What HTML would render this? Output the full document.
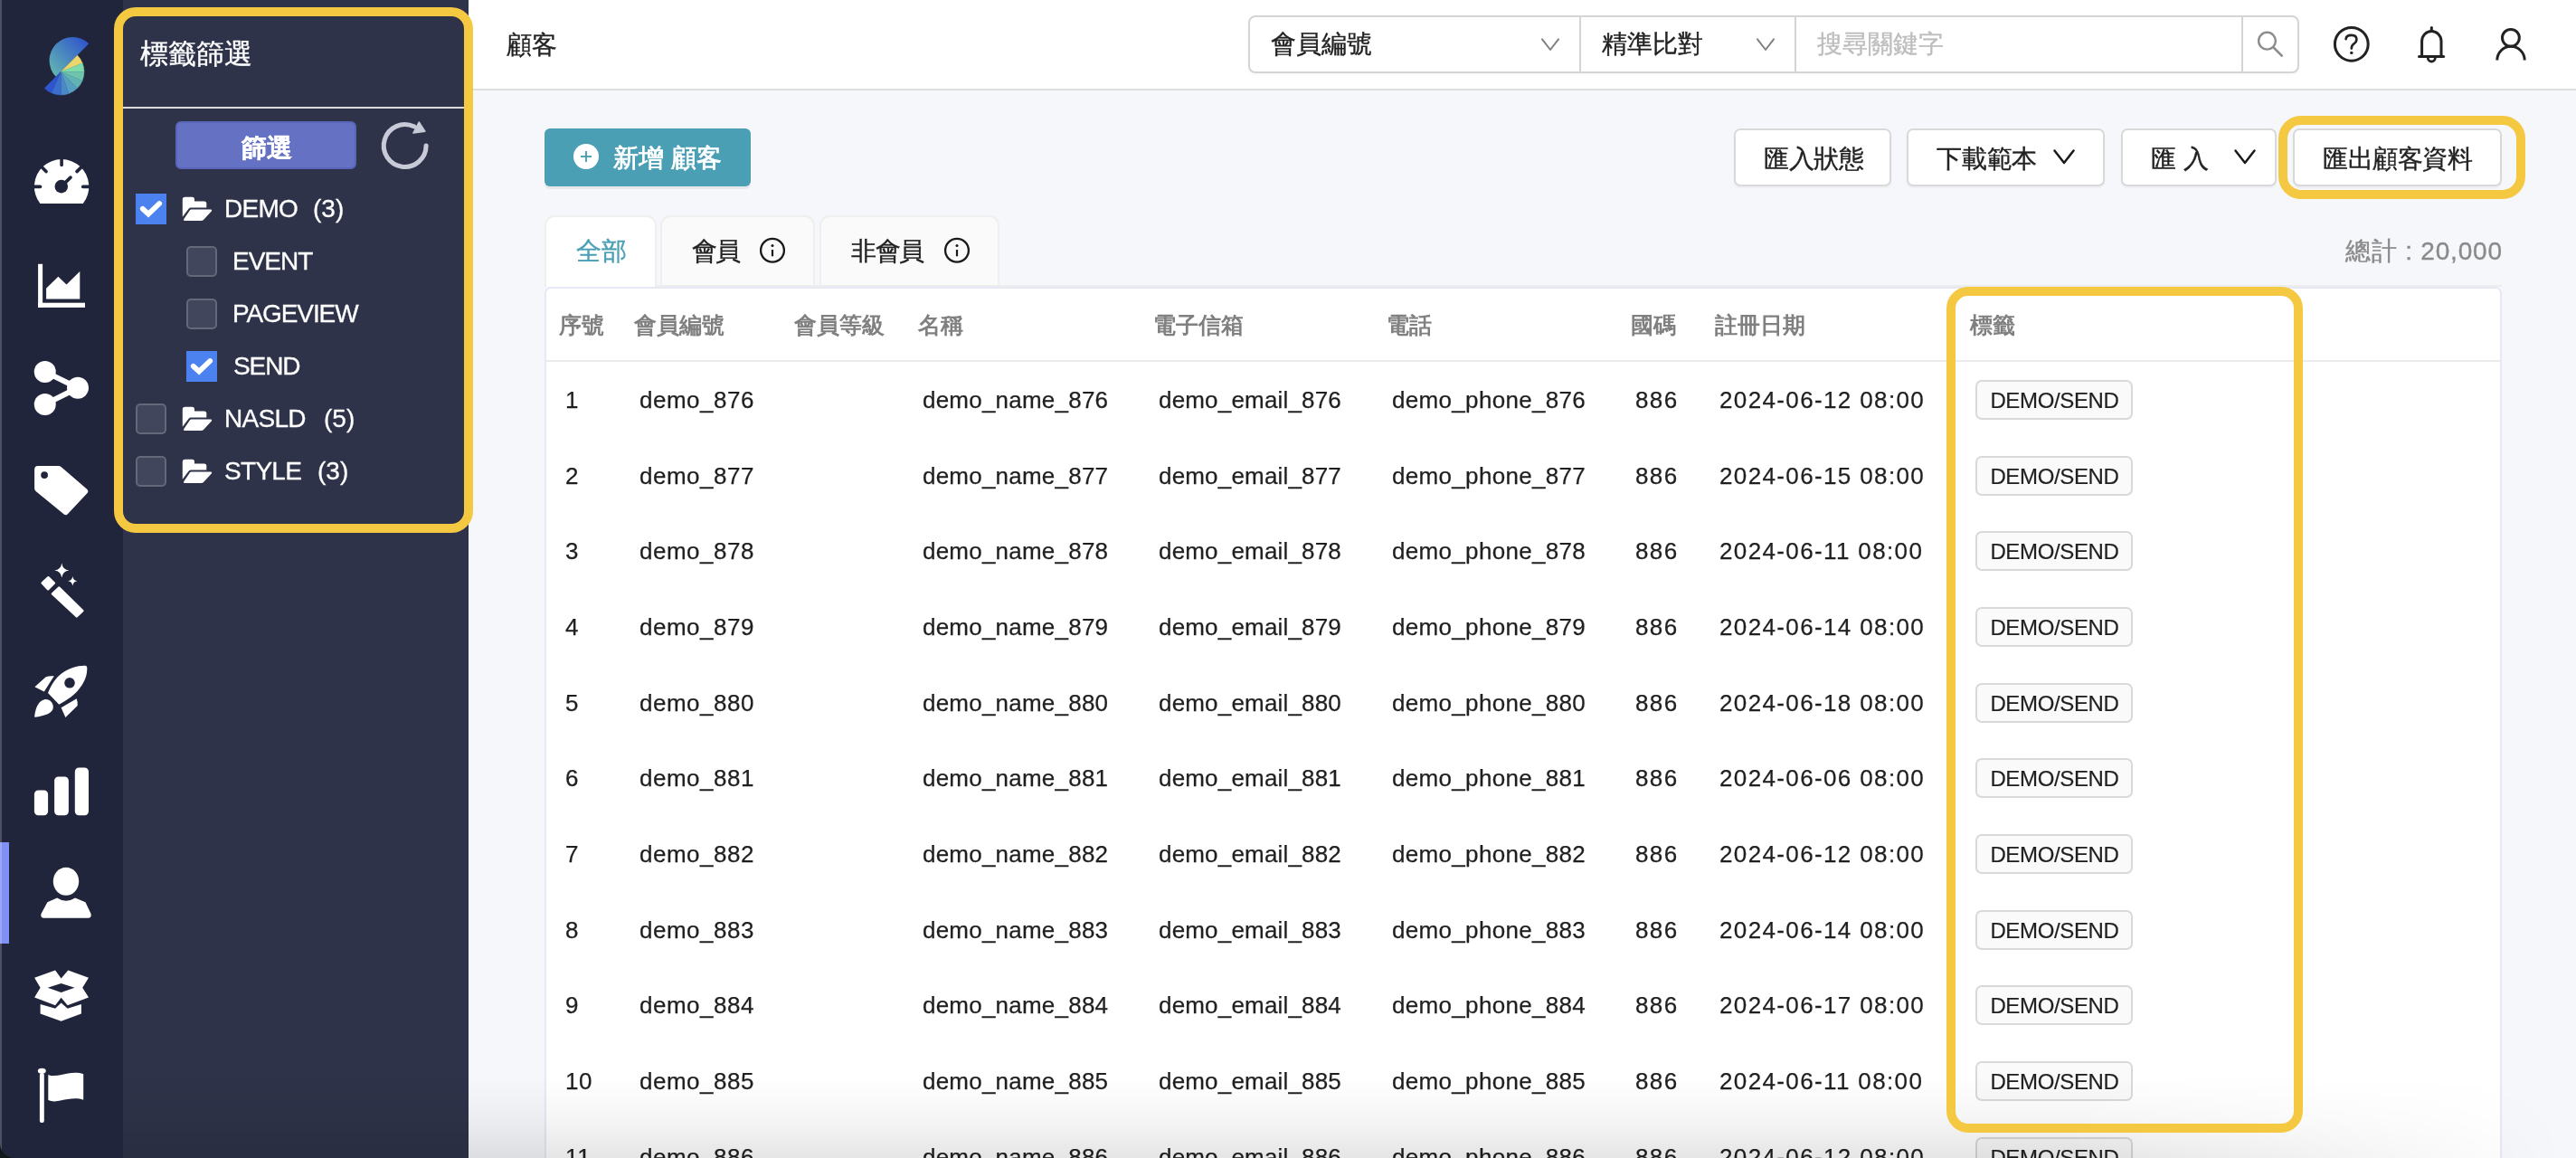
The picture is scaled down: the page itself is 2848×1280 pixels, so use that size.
<!DOCTYPE html>
<html><head><meta charset="utf-8">
<style>
*{box-sizing:border-box;margin:0;padding:0}
@media (max-width:1500px){html{zoom:0.5}}
html,body{width:2848px;height:1280px;overflow:hidden}
body{position:relative;background:#f6f7fb;font-family:"Liberation Sans",sans-serif;color:#222}
.abs{position:absolute}
#side{left:0;top:0;width:136px;height:1280px;background:#21253b}
#strip{left:0;top:0;width:2px;height:1280px;background:rgba(255,255,255,0.2)}
#panel{left:136px;top:0;width:382px;height:1280px;background:#2e3349}
#hdr{left:518px;top:0;width:2330px;height:100px;background:#fff;border-bottom:2px solid #dedede}
.t{position:absolute;white-space:nowrap;line-height:1;will-change:transform;-webkit-text-stroke:0.35px currentColor}
.ico{position:absolute}
.row{will-change:transform}
.row .c{position:absolute;white-space:nowrap;-webkit-text-stroke:0.25px #1f1f1f;font-size:26px;letter-spacing:0.6px;line-height:84px;top:0;color:#1f1f1f}
.th{position:absolute;white-space:nowrap;will-change:transform;font-size:25px;font-weight:bold;color:#808080;line-height:1}
.tag{position:absolute;left:2184px;width:174px;height:44px;border:2px solid #d9d9d9;border-radius:7px;background:#fafafa;font-size:24px;line-height:40px;text-align:center;color:#1f1f1f}
.tag span{position:relative;top:1px;left:0.5px;-webkit-text-stroke:0.2px #1f1f1f}
.btn{position:absolute;top:142px;height:64px;background:#fff;border:2px solid #d9d9d9;border-radius:7px;box-shadow:0 2px 2px rgba(0,0,0,0.04)}
.cb{position:absolute;width:34px;height:34px;border-radius:5px;background:#41465c;border:2px solid #646879}
.cbon{position:absolute;width:34px;height:34px;background:#4b82f0}
.lbl{position:absolute;color:#fff;font-size:28px;line-height:1;white-space:nowrap;will-change:transform;-webkit-text-stroke:0.3px #fff}
</style></head>
<body>
<div id="side" class="abs"></div>
<div class="abs" style="left:0;top:931px;width:10px;height:112px;background:#8190f5"></div>
<div id="strip" class="abs"></div>
<div id="panel" class="abs"></div>
<div id="hdr" class="abs"></div>

<!-- header -->
<div class="t" style="left:560px;top:36px;font-size:28px;color:#222">顧客</div>
<div class="abs" style="left:1380px;top:17px;width:1162px;height:64px;border:2px solid #d4d4d4;border-radius:8px;background:#fff;box-shadow:0 2px 3px rgba(0,0,0,0.03)"></div>
<div class="abs" style="left:1746px;top:17px;width:2px;height:64px;background:#d4d4d4"></div>
<div class="abs" style="left:1984px;top:17px;width:2px;height:64px;background:#d4d4d4"></div>
<div class="abs" style="left:2478px;top:17px;width:2px;height:64px;background:#d4d4d4"></div>
<div class="t" style="left:1405px;top:35px;font-size:28px;color:#222">會員編號</div>
<div class="t" style="left:1771px;top:35px;font-size:28px;color:#222">精準比對</div>
<div class="t" style="left:2009px;top:35px;font-size:28px;color:#bdbdbd">搜尋關鍵字</div>

<!-- new button -->
<div class="abs" style="left:602px;top:142px;width:228px;height:64px;background:#4a9fb4;border-radius:6px;box-shadow:0 3px 0 rgba(0,0,0,0.06)"></div>
<div class="abs" style="left:634px;top:159px;width:28px;height:28px;border-radius:50%;background:#fff"></div>
<div class="t" style="left:678px;top:161px;font-size:28px;color:#fff;-webkit-text-stroke:0.8px #fff">新增 顧客</div>

<!-- action buttons -->
<div class="btn" style="left:1917px;width:174px"></div>
<div class="t" style="left:1950px;top:162px;font-size:28px;letter-spacing:-0.5px">匯入狀態</div>
<div class="btn" style="left:2108px;width:219px"></div>
<div class="t" style="left:2141px;top:162px;font-size:28px;letter-spacing:-0.2px">下載範本</div>
<div class="btn" style="left:2345px;width:172px"></div>
<div class="t" style="left:2378px;top:162px;font-size:28px">匯&nbsp;入</div>
<div class="btn" style="left:2535px;width:231px"></div>
<div class="t" style="left:2568px;top:162px;font-size:28px;letter-spacing:-0.4px">匯出顧客資料</div>

<!-- tabs -->
<div class="abs" style="left:602px;top:238px;width:124px;height:79px;background:#fff;border:2px solid #efefef;border-bottom:none;border-radius:11px 11px 0 0"></div>
<div class="abs" style="left:730px;top:238px;width:171px;height:79px;background:#fafafa;border:2px solid #efefef;border-bottom:none;border-radius:11px 11px 0 0"></div>
<div class="abs" style="left:906px;top:238px;width:199px;height:79px;background:#fafafa;border:2px solid #efefef;border-bottom:none;border-radius:11px 11px 0 0"></div>
<div class="t" style="left:2593px;top:264px;font-size:28px;color:#8a8a8a;letter-spacing:0.8px">總計 : 20,000</div>
<!-- table card -->
<div class="abs" style="left:726px;top:315px;width:2040px;height:2px;background:#ededed"></div>
<div class="abs" style="left:602px;top:317px;width:2164px;height:1000px;background:#fff;border:2px solid #e6e9f5;border-radius:7px"></div>
<div class="t" style="left:637px;top:264px;font-size:28px;color:#4a9fb4">全部</div>
<div class="t" style="left:765px;top:264px;font-size:28px;letter-spacing:-1.6px">會員</div>
<div class="t" style="left:941px;top:264px;font-size:28px;letter-spacing:-1.4px">非會員</div>
<div class="abs" style="left:604px;top:398px;width:2160px;height:2px;background:#ebebeb"></div>
<div class="th" style="left:618px;top:347px">序號</div>
<div class="th" style="left:701px;top:347px">會員編號</div>
<div class="th" style="left:878px;top:347px">會員等級</div>
<div class="th" style="left:1015px;top:347px">名稱</div>
<div class="th" style="left:1275px;top:347px">電子信箱</div>
<div class="th" style="left:1533px;top:347px">電話</div>
<div class="th" style="left:1803px;top:347px">國碼</div>
<div class="th" style="left:1896px;top:347px">註冊日期</div>
<div class="th" style="left:2178px;top:347px">標籤</div>

<div class="abs row" style="left:0;top:400.00px;width:2848px;height:84px"><div class="c" style="left:625px">1</div><div class="c" style="left:707px;letter-spacing:0.5px">demo_876</div><div class="c" style="left:1020px;letter-spacing:0.22px">demo_name_876</div><div class="c" style="left:1281px;letter-spacing:0.18px">demo_email_876</div><div class="c" style="left:1539px;letter-spacing:0.32px">demo_phone_876</div><div class="c" style="left:1808px;letter-spacing:1.4px">886</div><div class="c" style="left:1901px;letter-spacing:1.37px">2024-06-12 08:00</div><div class="tag" style="top:20px"><span style="letter-spacing:-0.35px">DEMO/SEND</span></div></div>
<div class="abs row" style="left:0;top:483.65px;width:2848px;height:84px"><div class="c" style="left:625px">2</div><div class="c" style="left:707px;letter-spacing:0.5px">demo_877</div><div class="c" style="left:1020px;letter-spacing:0.22px">demo_name_877</div><div class="c" style="left:1281px;letter-spacing:0.18px">demo_email_877</div><div class="c" style="left:1539px;letter-spacing:0.32px">demo_phone_877</div><div class="c" style="left:1808px;letter-spacing:1.4px">886</div><div class="c" style="left:1901px;letter-spacing:1.37px">2024-06-15 08:00</div><div class="tag" style="top:20px"><span style="letter-spacing:-0.35px">DEMO/SEND</span></div></div>
<div class="abs row" style="left:0;top:567.30px;width:2848px;height:84px"><div class="c" style="left:625px">3</div><div class="c" style="left:707px;letter-spacing:0.5px">demo_878</div><div class="c" style="left:1020px;letter-spacing:0.22px">demo_name_878</div><div class="c" style="left:1281px;letter-spacing:0.18px">demo_email_878</div><div class="c" style="left:1539px;letter-spacing:0.32px">demo_phone_878</div><div class="c" style="left:1808px;letter-spacing:1.4px">886</div><div class="c" style="left:1901px;letter-spacing:1.37px">2024-06-11 08:00</div><div class="tag" style="top:20px"><span style="letter-spacing:-0.35px">DEMO/SEND</span></div></div>
<div class="abs row" style="left:0;top:650.95px;width:2848px;height:84px"><div class="c" style="left:625px">4</div><div class="c" style="left:707px;letter-spacing:0.5px">demo_879</div><div class="c" style="left:1020px;letter-spacing:0.22px">demo_name_879</div><div class="c" style="left:1281px;letter-spacing:0.18px">demo_email_879</div><div class="c" style="left:1539px;letter-spacing:0.32px">demo_phone_879</div><div class="c" style="left:1808px;letter-spacing:1.4px">886</div><div class="c" style="left:1901px;letter-spacing:1.37px">2024-06-14 08:00</div><div class="tag" style="top:20px"><span style="letter-spacing:-0.35px">DEMO/SEND</span></div></div>
<div class="abs row" style="left:0;top:734.60px;width:2848px;height:84px"><div class="c" style="left:625px">5</div><div class="c" style="left:707px;letter-spacing:0.5px">demo_880</div><div class="c" style="left:1020px;letter-spacing:0.22px">demo_name_880</div><div class="c" style="left:1281px;letter-spacing:0.18px">demo_email_880</div><div class="c" style="left:1539px;letter-spacing:0.32px">demo_phone_880</div><div class="c" style="left:1808px;letter-spacing:1.4px">886</div><div class="c" style="left:1901px;letter-spacing:1.37px">2024-06-18 08:00</div><div class="tag" style="top:20px"><span style="letter-spacing:-0.35px">DEMO/SEND</span></div></div>
<div class="abs row" style="left:0;top:818.25px;width:2848px;height:84px"><div class="c" style="left:625px">6</div><div class="c" style="left:707px;letter-spacing:0.5px">demo_881</div><div class="c" style="left:1020px;letter-spacing:0.22px">demo_name_881</div><div class="c" style="left:1281px;letter-spacing:0.18px">demo_email_881</div><div class="c" style="left:1539px;letter-spacing:0.32px">demo_phone_881</div><div class="c" style="left:1808px;letter-spacing:1.4px">886</div><div class="c" style="left:1901px;letter-spacing:1.37px">2024-06-06 08:00</div><div class="tag" style="top:20px"><span style="letter-spacing:-0.35px">DEMO/SEND</span></div></div>
<div class="abs row" style="left:0;top:901.90px;width:2848px;height:84px"><div class="c" style="left:625px">7</div><div class="c" style="left:707px;letter-spacing:0.5px">demo_882</div><div class="c" style="left:1020px;letter-spacing:0.22px">demo_name_882</div><div class="c" style="left:1281px;letter-spacing:0.18px">demo_email_882</div><div class="c" style="left:1539px;letter-spacing:0.32px">demo_phone_882</div><div class="c" style="left:1808px;letter-spacing:1.4px">886</div><div class="c" style="left:1901px;letter-spacing:1.37px">2024-06-12 08:00</div><div class="tag" style="top:20px"><span style="letter-spacing:-0.35px">DEMO/SEND</span></div></div>
<div class="abs row" style="left:0;top:985.55px;width:2848px;height:84px"><div class="c" style="left:625px">8</div><div class="c" style="left:707px;letter-spacing:0.5px">demo_883</div><div class="c" style="left:1020px;letter-spacing:0.22px">demo_name_883</div><div class="c" style="left:1281px;letter-spacing:0.18px">demo_email_883</div><div class="c" style="left:1539px;letter-spacing:0.32px">demo_phone_883</div><div class="c" style="left:1808px;letter-spacing:1.4px">886</div><div class="c" style="left:1901px;letter-spacing:1.37px">2024-06-14 08:00</div><div class="tag" style="top:20px"><span style="letter-spacing:-0.35px">DEMO/SEND</span></div></div>
<div class="abs row" style="left:0;top:1069.20px;width:2848px;height:84px"><div class="c" style="left:625px">9</div><div class="c" style="left:707px;letter-spacing:0.5px">demo_884</div><div class="c" style="left:1020px;letter-spacing:0.22px">demo_name_884</div><div class="c" style="left:1281px;letter-spacing:0.18px">demo_email_884</div><div class="c" style="left:1539px;letter-spacing:0.32px">demo_phone_884</div><div class="c" style="left:1808px;letter-spacing:1.4px">886</div><div class="c" style="left:1901px;letter-spacing:1.37px">2024-06-17 08:00</div><div class="tag" style="top:20px"><span style="letter-spacing:-0.35px">DEMO/SEND</span></div></div>
<div class="abs row" style="left:0;top:1152.85px;width:2848px;height:84px"><div class="c" style="left:625px">10</div><div class="c" style="left:707px;letter-spacing:0.5px">demo_885</div><div class="c" style="left:1020px;letter-spacing:0.22px">demo_name_885</div><div class="c" style="left:1281px;letter-spacing:0.18px">demo_email_885</div><div class="c" style="left:1539px;letter-spacing:0.32px">demo_phone_885</div><div class="c" style="left:1808px;letter-spacing:1.4px">886</div><div class="c" style="left:1901px;letter-spacing:1.37px">2024-06-11 08:00</div><div class="tag" style="top:20px"><span style="letter-spacing:-0.35px">DEMO/SEND</span></div></div>
<div class="abs row" style="left:0;top:1236.50px;width:2848px;height:84px"><div class="c" style="left:625px">11</div><div class="c" style="left:707px;letter-spacing:0.5px">demo_886</div><div class="c" style="left:1020px;letter-spacing:0.22px">demo_name_886</div><div class="c" style="left:1281px;letter-spacing:0.18px">demo_email_886</div><div class="c" style="left:1539px;letter-spacing:0.32px">demo_phone_886</div><div class="c" style="left:1808px;letter-spacing:1.4px">886</div><div class="c" style="left:1901px;letter-spacing:1.37px">2024-06-12 08:00</div><div class="tag" style="top:20px"><span style="letter-spacing:-0.35px">DEMO/SEND</span></div></div>

<!-- panel content -->
<div class="t" style="left:155px;top:44px;font-size:31px;color:#fff">標籤篩選</div>
<div class="abs" style="left:136px;top:118px;width:377px;height:2px;background:#dcdcdc"></div>
<div class="abs" style="left:194px;top:134px;width:200px;height:53px;background:#6571c3;border:2px solid #5865b8;border-radius:6px"></div>
<div class="t" style="left:267px;top:150px;font-size:28px;color:#fff;font-weight:bold">篩選</div>

<div class="cbon" style="left:150px;top:214px"></div>
<div class="lbl" style="left:248px;top:217px"><span style="letter-spacing:-0.7px">DEMO</span><span style="position:absolute;left:98px">(3)</span></div>
<div class="cb" style="left:206px;top:272px"></div>
<div class="lbl" style="left:257px;top:275px;letter-spacing:-1px">EVENT</div>
<div class="cb" style="left:206px;top:330px"></div>
<div class="lbl" style="left:257px;top:333px;letter-spacing:-1.1px">PAGEVIEW</div>
<div class="cbon" style="left:206px;top:388px"></div>
<div class="lbl" style="left:258px;top:391px;letter-spacing:-1.1px">SEND</div>
<div class="cb" style="left:150px;top:446px"></div>
<div class="lbl" style="left:248px;top:449px"><span style="letter-spacing:-0.7px">NASLD</span><span style="position:absolute;left:110px">(5)</span></div>
<div class="cb" style="left:150px;top:504px"></div>
<div class="lbl" style="left:248px;top:507px"><span style="letter-spacing:-0.7px">STYLE</span><span style="position:absolute;left:103px">(3)</span></div>

<svg class="abs" style="left:0;top:0" width="2848" height="1280" viewBox="0 0 2848 1280">
<defs><linearGradient id="lg" x1="1" y1="0" x2="0" y2="1"><stop offset="0" stop-color="#2a4ccf"/><stop offset="1" stop-color="#66bdb0"/></linearGradient></defs>
<path d="M98.24 48.26 A25.8 25.8 0 0 0 61.76 84.74 Z" fill="url(#lg)"/>
<path d="M67.3 79.3 L85.54 61.06 A25.8 25.8 0 0 1 91.22 69.64 Z" fill="#ecd66b" stroke="#ecd66b" stroke-width="0.3"/><path d="M67.3 79.3 L91.22 69.64 A25.8 25.8 0 0 1 93.10 79.30 Z" fill="#7ddcaa" stroke="#7ddcaa" stroke-width="0.3"/><path d="M67.3 79.3 L93.10 79.30 A25.8 25.8 0 0 1 91.12 89.21 Z" fill="#6fc4ae" stroke="#6fc4ae" stroke-width="0.3"/><path d="M67.3 79.3 L91.12 89.21 A25.8 25.8 0 0 1 85.54 97.54 Z" fill="#62b4b3" stroke="#62b4b3" stroke-width="0.3"/><path d="M67.3 79.3 L85.54 97.54 A25.8 25.8 0 0 1 76.12 103.54 Z" fill="#569fc0" stroke="#569fc0" stroke-width="0.3"/><path d="M67.3 79.3 L76.12 103.54 A25.8 25.8 0 0 1 67.30 105.10 Z" fill="#4a88c8" stroke="#4a88c8" stroke-width="0.3"/><path d="M67.3 79.3 L67.30 105.10 A25.8 25.8 0 0 1 56.81 102.87 Z" fill="#3c6fcc" stroke="#3c6fcc" stroke-width="0.3"/><path d="M67.3 79.3 L56.81 102.87 A25.8 25.8 0 0 1 49.06 97.54 Z" fill="#2e55d0" stroke="#2e55d0" stroke-width="0.3"/>
<g fill="#fff">
<path d="M44.4 225 A30.2 30.2 0 1 1 91.8 225 Z"/>
<g stroke="#21253b" stroke-width="3.6" stroke-linecap="round" fill="none">
<line x1="68.1" y1="175" x2="68.1" y2="182.5"/><line x1="36" y1="206.4" x2="44.5" y2="206.4"/><line x1="91.7" y1="206.4" x2="100" y2="206.4"/>
<line x1="45" y1="183.5" x2="51" y2="189.6"/><line x1="91.2" y1="183.5" x2="85" y2="189.6"/>
<line x1="67.8" y1="206.1" x2="78" y2="196.1"/></g>
<circle cx="67.8" cy="206.1" r="7.3" fill="#21253b"/>
<rect x="42.1" y="291.8" width="5" height="48.1"/><rect x="42.1" y="334.7" width="51.9" height="5.2"/>
<polygon points="51.1,318.7 64.4,305.7 73.5,314.4 88.3,299.9 88.3,330.5 51.1,330.5"/>
<circle cx="49.75" cy="410.9" r="12"/><circle cx="49.75" cy="446.9" r="12"/><circle cx="86" cy="428.7" r="12"/>
<g stroke="#fff" stroke-width="6"><line x1="49.75" y1="410.9" x2="86" y2="428.7"/><line x1="49.75" y1="446.9" x2="86" y2="428.7"/></g>
<path d="M42 515 L64.5 515 Q66.3 515 67.8 516.3 L96.5 541 Q98.3 543 96.8 544.8 L74.8 568.3 Q72.8 570.2 70.8 568.6 L39.6 543 Q38.1 541.5 38.1 539.5 L38.1 519 Q38.1 515 42 515 Z"/>
<circle cx="49.1" cy="525.1" r="3.9" fill="#21253b"/>
<g stroke="#fff" stroke-width="2.4" stroke-linejoin="round">
<path d="M46.6 644.5 L53.4 638.2 L60 644.5 L53.1 651.3 Z"/>
<path d="M57.9 656.4 L65.4 649.5 L91.4 675.2 L84.8 681.4 Z"/></g>
<path d="M68.3 622.5 Q69.2 629.6 76.4 630.5 Q69.2 631.4 68.3 638.5 Q67.4 631.4 60.2 630.5 Q67.4 629.6 68.3 622.5 Z"/>
<path d="M80.3 636.9 Q80.9 641.6 85.6 642.2 Q80.9 642.8 80.3 647.5 Q79.7 642.8 75 642.2 Q79.7 641.6 80.3 636.9 Z"/>
<path d="M53 766 C57 756 62 749 68 744.5 C76 738.5 86 735.5 94.5 735.8 Q96.2 736 96.3 738 C96.5 746 94 755 85 764.5 C80 770 72 775 65.3 778.8 Z"/>
<circle cx="77" cy="754.8" r="5.8" fill="#21253b"/>
<path d="M38.4 759.3 L50.7 748.2 Q54 746.8 59.8 747.3 L48.8 764.5 Z"/>
<path d="M67.6 782.3 L84.7 772.3 Q86 775.5 85.7 780 L72.4 793 Z"/>
<path d="M38.1 792.7 C39 782 43 774 50 773 C55 772.5 59 777 58.8 782 C58.5 788 50 791.5 38.1 792.7 Z"/>
<rect x="37.9" y="873.4" width="15.2" height="27.8" rx="4.5"/><rect x="60.1" y="858.5" width="15.8" height="42.7" rx="4.5"/><rect x="82.8" y="848.4" width="15.2" height="52.8" rx="4.5"/>
<ellipse cx="73" cy="974.3" rx="14.2" ry="15.5"/>
<path d="M52.4 997.3 L63.1 992.5 Q73 999 83.1 992.5 L94.5 997.3 L100.5 1010 Q101.8 1014.8 97 1014.8 L49 1014.8 Q44.2 1014.8 45.5 1010 Z"/>
<path fill-rule="evenodd" d="M38.1 1080.8 L61.1 1072.4 L67.6 1081.4 L75.3 1072.4 L98 1080.8 L91.2 1091.8 L98 1102.5 L74.7 1111.2 L67.6 1102.8 L61.1 1111.2 L38.1 1102.5 L44.6 1091.8 Z M52.7 1091.8 L67.6 1086.9 L82.5 1091.8 L67.6 1097 Z"/>
<path d="M44.6 1109.9 L61.1 1114.8 L67.6 1108.6 L74.7 1114.8 L89.9 1109.9 L89.9 1120.6 L67.6 1128.7 L44.6 1120.6 Z"/>
<rect x="43.9" y="1185.9" width="4.9" height="55.1" rx="2"/><ellipse cx="46.3" cy="1183.7" rx="4.5" ry="2.9"/>
<path d="M53.3 1187.9 C57 1189.5 62 1189.5 68 1188 C75 1186 85 1184.5 92.2 1187.2 L92.2 1215.7 C85 1213 75 1214.5 68 1216.3 C62 1217.8 57 1217.8 53.3 1216 Z"/>
</g>
<path d="M471.1 161 A23.4 23.4 0 1 1 457.6 139.8" fill="none" stroke="#c8cad8" stroke-width="5.1" stroke-linecap="round"/>
<polygon points="463.2,135 469.9,145.2 456.9,147.1" fill="#c8cad8" stroke="#c8cad8" stroke-width="1.5" stroke-linejoin="round"/>
<g fill="none" stroke="#fff" stroke-width="5.8" stroke-linecap="round" stroke-linejoin="miter">
<path d="M157.8 230.8 L164.1 236.6 L176.2 225"/><path d="M213.8 404.8 L220.1 410.6 L232.2 399"/></g>
<g fill="#fff">
<path d="M201.8 220.5 Q201.8 217.7 204.6 217.7 L212.4 217.7 Q215 217.7 215 220.3 L215 222.5 L225.8 222.5 Q228.3 222.5 228.3 225.1 L228.3 229.4 L211.3 229.4 Q209.6 229.4 208.6 230.8 L201.8 239.8 Z"/><path d="M211.6 231.4 L233 231.4 Q234.8 231.6 234 233.2 L225 243.0 Q224 244.1 222.3 244.1 L204.2 244.1 Q202.2 243.9 203.2 242.3 L210 232.3 Q210.6 231.4 211.6 231.4 Z"/>
<path d="M201.8 452.5 Q201.8 449.7 204.6 449.7 L212.4 449.7 Q215 449.7 215 452.3 L215 454.5 L225.8 454.5 Q228.3 454.5 228.3 457.1 L228.3 461.4 L211.3 461.4 Q209.6 461.4 208.6 462.8 L201.8 471.8 Z"/><path d="M211.6 463.4 L233 463.4 Q234.8 463.6 234 465.2 L225 475.0 Q224 476.1 222.3 476.1 L204.2 476.1 Q202.2 475.9 203.2 474.3 L210 464.3 Q210.6 463.4 211.6 463.4 Z"/>
<path d="M201.8 510.5 Q201.8 507.7 204.6 507.7 L212.4 507.7 Q215 507.7 215 510.3 L215 512.5 L225.8 512.5 Q228.3 512.5 228.3 515.1 L228.3 519.4 L211.3 519.4 Q209.6 519.4 208.6 520.8 L201.8 529.8 Z"/><path d="M211.6 521.4 L233 521.4 Q234.8 521.6 234 523.2 L225 533.0 Q224 534.1 222.3 534.1 L204.2 534.1 Q202.2 533.9 203.2 532.3 L210 522.3 Q210.6 521.4 211.6 521.4 Z"/>
</g>
<g fill="none" stroke-linecap="round" stroke-linejoin="round">
<path d="M1705 43.3 L1714 55 L1723 43.3" stroke="#808080" stroke-width="2"/>
<path d="M1943 43.3 L1952 55 L1961 43.3" stroke="#808080" stroke-width="2"/>
<path d="M2271.5 166.5 L2282 180 L2292.5 166.5" stroke="#1a1a1a" stroke-width="2.5"/>
<path d="M2471.5 166.5 L2482 180 L2492.5 166.5" stroke="#1a1a1a" stroke-width="2.5"/>
<circle cx="2506.5" cy="45.2" r="9.4" stroke="#8c8c8c" stroke-width="2.4"/>
<line x1="2513.6" y1="52.4" x2="2522.6" y2="61.5" stroke="#8c8c8c" stroke-width="2.6" stroke-linecap="square"/>
<circle cx="2599.8" cy="48.8" r="18.4" stroke="#222" stroke-width="3"/>
<path d="M2593.6 43.2 Q2593.8 38.9 2599.8 38.9 Q2605.4 38.9 2605.4 43.6 Q2605.4 46.6 2602.2 48.6 Q2599.8 50.2 2599.8 53.6" stroke="#222" stroke-width="2.6"/>
<path d="M2677.6 62 L2677.6 45.5 A10.7 11 0 0 1 2699 45.5 L2699 62" stroke="#222" stroke-width="3"/>
<line x1="2688.3" y1="30.5" x2="2688.3" y2="33.5" stroke="#222" stroke-width="3"/>
<line x1="2674.5" y1="62.4" x2="2701.6" y2="62.4" stroke="#222" stroke-width="3"/>
<path d="M2684.3 64 A4 4 0 0 0 2692.3 64" stroke="#222" stroke-width="2.8"/>
<circle cx="2775.9" cy="41.8" r="9.4" stroke="#222" stroke-width="3"/>
<path d="M2760.8 66.5 A15.2 15.2 0 0 1 2791.2 66.5" stroke="#222" stroke-width="3" stroke-linecap="butt"/>
<circle cx="854" cy="276.8" r="12.9" stroke="#1a1a1a" stroke-width="2.3"/>
<line x1="854" y1="276" x2="854" y2="283.3" stroke="#1a1a1a" stroke-width="2.2" stroke-linecap="butt"/>
<circle cx="1058" cy="276.8" r="12.9" stroke="#1a1a1a" stroke-width="2.3"/>
<line x1="1058" y1="276" x2="1058" y2="283.3" stroke="#1a1a1a" stroke-width="2.2" stroke-linecap="butt"/>
<g stroke="#4a9fb4" stroke-width="1.9" stroke-linecap="butt"><line x1="642" y1="173" x2="654" y2="173"/><line x1="648" y1="167" x2="648" y2="179"/></g>
</g>
<circle cx="2599.8" cy="58.4" r="1.7" fill="#222"/>
<circle cx="854" cy="271.5" r="1.5" fill="#1a1a1a"/><circle cx="1058" cy="271.5" r="1.5" fill="#1a1a1a"/>
</svg>
<div class="abs" style="left:136px;top:1150px;width:2712px;height:130px;background:linear-gradient(to bottom,rgba(0,0,0,0) 0,rgba(0,0,0,0) 30%,rgba(0,0,0,0.035) 65%,rgba(0,0,0,0.1) 100%);-webkit-mask-image:linear-gradient(to right,#000 0,#000 2150px,transparent 2700px)"></div>
<!-- highlight boxes -->
<div class="abs" style="left:126px;top:8px;width:397px;height:581px;border:10px solid #f5c842;border-radius:24px"></div>
<div class="abs" style="left:2519px;top:128px;width:273px;height:92px;border:10px solid #f5c842;border-radius:25px"></div>
<div class="abs" style="left:2152px;top:317px;width:394px;height:935px;border:10px solid #f5c842;border-radius:24px"></div>


<svg class="abs" style="left:0;top:1260px" width="24" height="20"><path d="M0 4 A16 16 0 0 0 16 20 L0 20 Z" fill="#10181b"/></svg>
</body></html>
